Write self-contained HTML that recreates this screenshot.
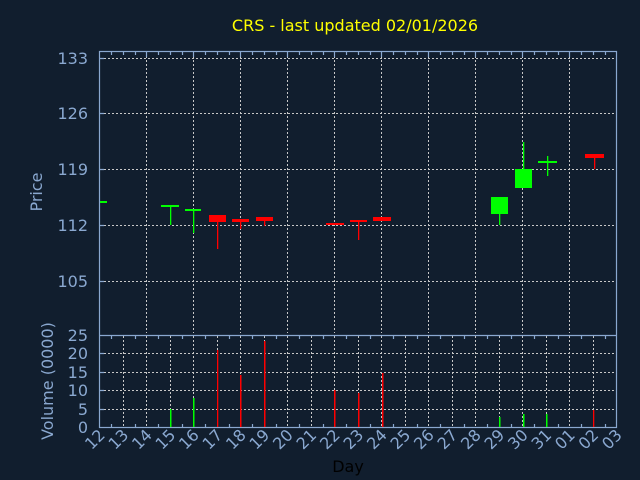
<!DOCTYPE html>
<html><head><meta charset="utf-8"><style>
html,body{margin:0;padding:0;background:#111e2e;}
svg{display:block;}
text{font-family:"DejaVu Sans","Liberation Sans",sans-serif;}
</style></head><body>
<svg width="640" height="480" viewBox="0 0 640 480" xmlns="http://www.w3.org/2000/svg">
<rect width="640" height="480" fill="#111e2e"/>
<text x="355" y="31" fill="#ffff00" font-size="16" text-anchor="middle">CRS - last updated 02/01/2026</text>
<!-- price grid -->
<g stroke="#c8c8c8" stroke-width="1" stroke-dasharray="2,2" fill="none">
<path d="M100 58.5H616M100 113.5H616M100 169.5H616M100 225.5H616M100 281.5H616"/>
<path d="M146.5 52V333M193.5 52V333M240.5 52V333M287.5 52V333M334.5 52V333M381.5 52V333M428.5 52V333M475.5 52V333M522.5 52V333M569.5 52V333"/>
<path d="M100 353.5H616M100 372.5H616M100 390.5H616M100 409.5H616"/>
<path d="M123.5 336V427M146.5 336V427M170.5 336V427M193.5 336V427M217.5 336V427M240.5 336V427M264.5 336V427M287.5 336V427M311.5 336V427M334.5 336V427M358.5 336V427M381.5 336V427M405.5 336V427M428.5 336V427M452.5 336V427M475.5 336V427M499.5 336V427M522.5 336V427M546.5 336V427M569.5 336V427M593.5 336V427"/>
</g>
<!-- axes -->
<g stroke="#8aa8d0" stroke-width="1.2" fill="none">
<rect x="99.5" y="51.5" width="517" height="376"/>
<path d="M99.5 335.5H616.5"/>
<path d="M111.5 52v3M123.5 52v3M135.5 52v3M158.5 52v3M170.5 52v3M182.5 52v3M205.5 52v3M217.5 52v3M229.5 52v3M252.5 52v3M264.5 52v3M276.5 52v3M299.5 52v3M311.5 52v3M323.5 52v3M346.5 52v3M358.5 52v3M370.5 52v3M393.5 52v3M405.5 52v3M417.5 52v3M440.5 52v3M452.5 52v3M464.5 52v3M487.5 52v3M499.5 52v3M511.5 52v3M534.5 52v3M546.5 52v3M558.5 52v3M581.5 52v3M593.5 52v3M605.5 52v3"/>
<path d="M146.5 52v5M193.5 52v5M240.5 52v5M287.5 52v5M334.5 52v5M381.5 52v5M428.5 52v5M475.5 52v5M522.5 52v5M569.5 52v5"/>
<path d="M111.5 336v3M135.5 336v3M158.5 336v3M182.5 336v3M205.5 336v3M229.5 336v3M252.5 336v3M276.5 336v3M299.5 336v3M323.5 336v3M346.5 336v3M370.5 336v3M393.5 336v3M417.5 336v3M440.5 336v3M464.5 336v3M487.5 336v3M511.5 336v3M534.5 336v3M558.5 336v3M581.5 336v3M605.5 336v3"/>
<path d="M111.5 427v-3M135.5 427v-3M158.5 427v-3M182.5 427v-3M205.5 427v-3M229.5 427v-3M252.5 427v-3M276.5 427v-3M299.5 427v-3M323.5 427v-3M346.5 427v-3M370.5 427v-3M393.5 427v-3M417.5 427v-3M440.5 427v-3M464.5 427v-3M487.5 427v-3M511.5 427v-3M534.5 427v-3M558.5 427v-3M581.5 427v-3M605.5 427v-3"/>
<path d="M100 58.5h4M100 113.5h4M100 169.5h4M100 225.5h4M100 281.5h4M100 353.5h4M100 372.5h4M100 390.5h4M100 409.5h4"/>
</g>
<!-- y labels -->
<g fill="#8aa8d0" font-size="16" text-anchor="end">
<text x="88" y="64">133</text><text x="88" y="119">126</text><text x="88" y="175">119</text><text x="88" y="231">112</text><text x="88" y="287">105</text>
<text x="88" y="341">25</text><text x="88" y="359">20</text><text x="88" y="378">15</text><text x="88" y="396">10</text><text x="88" y="415">5</text><text x="88" y="433">0</text>
</g>
<text transform="translate(42 192) rotate(-90)" fill="#8aa8d0" font-size="16" text-anchor="middle">Price</text>
<text transform="translate(53 381) rotate(-90)" fill="#8aa8d0" font-size="16" text-anchor="middle">Volume (0000)</text>
<!-- x labels -->
<g fill="#8aa8d0" font-size="16" text-anchor="end">
<text transform="translate(106 436) rotate(-45)">12</text>
<text transform="translate(129.5 436) rotate(-45)">13</text>
<text transform="translate(153 436) rotate(-45)">14</text>
<text transform="translate(176.5 436) rotate(-45)">15</text>
<text transform="translate(200 436) rotate(-45)">16</text>
<text transform="translate(223.5 436) rotate(-45)">17</text>
<text transform="translate(247 436) rotate(-45)">18</text>
<text transform="translate(270.5 436) rotate(-45)">19</text>
<text transform="translate(294 436) rotate(-45)">20</text>
<text transform="translate(317.5 436) rotate(-45)">21</text>
<text transform="translate(341 436) rotate(-45)">22</text>
<text transform="translate(364.5 436) rotate(-45)">23</text>
<text transform="translate(388 436) rotate(-45)">24</text>
<text transform="translate(411.5 436) rotate(-45)">25</text>
<text transform="translate(435 436) rotate(-45)">26</text>
<text transform="translate(458.5 436) rotate(-45)">27</text>
<text transform="translate(482 436) rotate(-45)">28</text>
<text transform="translate(505.5 436) rotate(-45)">29</text>
<text transform="translate(529 436) rotate(-45)">30</text>
<text transform="translate(552.5 436) rotate(-45)">31</text>
<text transform="translate(576 436) rotate(-45)">01</text>
<text transform="translate(599.5 436) rotate(-45)">02</text>
<text transform="translate(623 436) rotate(-45)">03</text>
</g>
<text x="348" y="472" fill="#000" font-size="16" text-anchor="middle">Day</text>
<!-- candles green -->
<g fill="#00ff00">
<rect x="100" y="201" width="7" height="2"/>
<rect x="161" y="205" width="18" height="2"/><rect x="170" y="207" width="1.3" height="18"/>
<rect x="185" y="209" width="16" height="2"/><rect x="193" y="211" width="1.3" height="22"/>
<rect x="491" y="197" width="17" height="17"/><rect x="499" y="214" width="1.3" height="11"/>
<rect x="515" y="169" width="17" height="19"/><rect x="523" y="142" width="1.3" height="27"/>
<rect x="538" y="161" width="19" height="2"/><rect x="547" y="156" width="1.3" height="20"/>
<rect x="170" y="409" width="1.5" height="18"/><rect x="193" y="398" width="1.5" height="29"/>
<rect x="499" y="417" width="1.5" height="10"/><rect x="523" y="414" width="1.5" height="13"/><rect x="546" y="414" width="1.5" height="13"/>
</g>
<g fill="#ff0000">
<rect x="209" y="215" width="17" height="7"/><rect x="217" y="222" width="1.3" height="27"/>
<rect x="232" y="219" width="17" height="3"/><rect x="240" y="222" width="1.3" height="7"/>
<rect x="256" y="217" width="17" height="4"/><rect x="264" y="221" width="1.3" height="5"/>
<rect x="326" y="223" width="18" height="2"/>
<rect x="350" y="220" width="17" height="2"/><rect x="358" y="222" width="1.3" height="18"/>
<rect x="373" y="217" width="18" height="4"/>
<rect x="585" y="154" width="19" height="4"/><rect x="594" y="158" width="1.3" height="11"/>
<rect x="217" y="350" width="1.3" height="77"/><rect x="240" y="375" width="1.5" height="52"/><rect x="264" y="341" width="1.5" height="86"/>
<rect x="334" y="390" width="1.5" height="37"/><rect x="358" y="393" width="1.5" height="34"/><rect x="382" y="373" width="1.5" height="54"/>
<rect x="593" y="410" width="1.3" height="17"/>
</g>
</svg>
</body></html>
